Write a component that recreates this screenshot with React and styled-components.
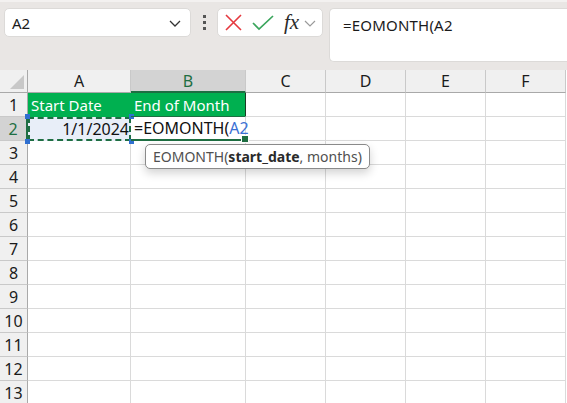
import styled, { createGlobalStyle } from "styled-components";

const Global = createGlobalStyle`
  html, body { margin: 0; padding: 0; background: #ffffff; overflow: hidden; }
  body { font-family: "Noto Sans", "Open Sans", sans-serif; }
`;

const Page = styled.div`
  width: 567px;
  height: 403px;
  position: relative;
  overflow: hidden;
  background: #ffffff;
`;

const Toolbar = styled.div`
  height: 70px;
  box-sizing: border-box;
  background: #e9e6e4;
  border-top: 2px solid #f3f1f0;
  display: flex;
  align-items: flex-start;
  padding: 6px 0 0 4px;
`;

const NameBox = styled.div`
  width: 187px;
  height: 29px;
  box-sizing: border-box;
  background: #fff;
  border: 1px solid #dcdad8;
  border-radius: 5px;
  display: flex;
  align-items: center;
  justify-content: space-between;
  padding: 0 8px 0 7px;
  font-size: 15px;
  color: #1b1b1b;
`;

const Dots = styled.div`
  width: 26px;
  height: 29px;
  display: flex;
  flex-direction: column;
  align-items: center;
  justify-content: center;
  gap: 3px;
  & > span {
    width: 3px;
    height: 3px;
    background: #555;
  }
`;

const ButtonGroup = styled.div`
  width: 106px;
  height: 29px;
  box-sizing: border-box;
  background: #fff;
  border: 1px solid #dcdad8;
  border-radius: 5px;
  display: flex;
  align-items: center;
  padding: 0 0 0 6px;
  gap: 9px;
`;

const Fx = styled.span`
  font-family: "Liberation Serif", "DejaVu Serif", serif;
  font-style: italic;
  font-size: 21px;
  color: #2a2a2a;
  margin-left: 1px;
  line-height: 1;
`;

const Chevron = styled.svg`
  margin-left: -4px;
`;

const FormulaInput = styled.div`
  margin-left: 6px;
  flex: 1;
  height: 54px;
  box-sizing: border-box;
  background: #fff;
  border: 1px solid #dcdad8;
  border-right: none;
  border-radius: 5px 0 0 5px;
  padding: 6px 0 0 13px;
  font-size: 15px;
  color: #1b1b1b;
  letter-spacing: 0.2px;
`;

const Grid = styled.div`
  display: grid;
  grid-template-columns: 28px 103px 115px 80px 80px 80px 80px;
  grid-template-rows: 23px repeat(13, 24px);
`;

const ColHead = styled.div`
  box-sizing: border-box;
  background: ${(p) => (p.active ? "#d3d3d3" : "#f0f0f0")};
  color: ${(p) => (p.active ? "#1e6e42" : "#1b1b1b")};
  border-right: 1px solid #c9c9c9;
  border-bottom: ${(p) => (p.active ? "2px solid #1e6e42" : "1px solid #a9a9a9")};
  display: flex;
  align-items: center;
  justify-content: center;
  font-size: 16px;
`;

const Corner = styled.div`
  box-sizing: border-box;
  background: #f0f0f0;
  border-right: 1px solid #a9a9a9;
  border-bottom: 1px solid #a9a9a9;
  position: relative;
  &::after {
    content: "";
    position: absolute;
    right: 3px;
    bottom: 3px;
    border-left: 14px solid transparent;
    border-bottom: 14px solid #c8c8c8;
  }
`;

const RowHead = styled.div`
  box-sizing: border-box;
  background: ${(p) => (p.active ? "#d3d3d3" : "#f0f0f0")};
  color: ${(p) => (p.active ? "#1e6e42" : "#1b1b1b")};
  border-right: ${(p) => (p.active ? "2px solid #1e6e42" : "1px solid #a9a9a9")};
  border-bottom: 1px solid #c9c9c9;
  display: flex;
  align-items: center;
  justify-content: center;
  font-size: 16px;
`;

const Cell = styled.div`
  box-sizing: border-box;
  border-right: 1px solid #dadada;
  border-bottom: 1px solid #dadada;
  position: relative;
  display: flex;
  align-items: center;
  font-size: 15px;
  color: #111;
  padding: 0 3px;
  white-space: nowrap;
`;

const HeadCell = styled(Cell)`
  background: #00b050;
  color: #fff;
  border-bottom-color: #00b050;
  border-right: ${(p) => (p.dark ? "1px solid #1a3a24" : "1px solid #00b050")};
`;

const CopyCell = styled(Cell)`
  background: #e8eef8;
  justify-content: flex-end;
  border: none;
  outline: 2px dashed #1e6e42;
  outline-offset: -2px;
  font-size: 16px;
  padding-right: 2px;
  z-index: 1;
`;

const Handle = styled.span`
  position: absolute;
  width: 5px;
  height: 5px;
  background: #2f6fd0;
  ${(p) => (p.top ? "top: -3px;" : "bottom: -3px;")}
  ${(p) => (p.left ? "left: -3px;" : "right: -3px;")}
`;

const EditCell = styled(Cell)`
  border-top: 1px solid #1e6e42;
  border-bottom: 2px solid #1e6e42;
  border-right: 1px solid #dadada;
  margin-top: -1px;
  font-size: 16px;
  padding-left: 3px;
  z-index: 2;
`;

const Ref = styled.span`
  color: #3b70d4;
`;

const FillHandle = styled.span`
  position: absolute;
  right: -4px;
  bottom: -4px;
  width: 6px;
  height: 6px;
  background: #1e6e42;
  border: 1px solid #fff;
`;

const Tip = styled.div`
  position: absolute;
  left: 145px;
  top: 144px;
  height: 25px;
  box-sizing: border-box;
  padding: 0 7px;
  display: flex;
  align-items: center;
  background: #fff;
  border: 1px solid #8a8a8a;
  border-radius: 5px;
  box-shadow: 0 4px 10px rgba(0, 0, 0, 0.18);
  font-size: 14px;
  color: #505050;
  white-space: nowrap;
  z-index: 5;
  & b {
    color: #2a2a2a;
  }
`;

const cols = ["A", "B", "C", "D", "E", "F"];

export default function App() {
  const rows = Array.from({ length: 13 }, (_, i) => i + 1);
  return (
    <Page>
      <Global />
      <Toolbar>
        <NameBox>
          <span>A2</span>
          <svg width="14" height="14" viewBox="0 0 14 14">
            <path d="M2 5l5 5 5-5" fill="none" stroke="#333" strokeWidth="1.3" />
          </svg>
        </NameBox>
        <Dots>
          <span />
          <span />
          <span />
        </Dots>
        <ButtonGroup>
          <svg width="19" height="19" viewBox="0 0 19 19">
            <path d="M2 2l15 15M17 2L2 17" stroke="#e5393f" strokeWidth="1.6" fill="none" />
          </svg>
          <svg width="22" height="18" viewBox="0 0 22 18">
            <path d="M1 9l6 6L21 2" stroke="#3aa55c" strokeWidth="1.7" fill="none" />
          </svg>
          <Fx>fx</Fx>
          <Chevron width="12" height="12" viewBox="0 0 12 12">
            <path d="M1 4l5 5 5-5" fill="none" stroke="#9a9a9a" strokeWidth="1.2" />
          </Chevron>
        </ButtonGroup>
        <FormulaInput>=EOMONTH(A2</FormulaInput>
      </Toolbar>
      <Grid>
        <Corner />
        {cols.map((c) => (
          <ColHead key={c} active={c === "B"}>
            {c}
          </ColHead>
        ))}
        {rows.map((r) => {
          if (r === 1) {
            return [
              <RowHead key="h1">1</RowHead>,
              <HeadCell key="a1">Start Date</HeadCell>,
              <HeadCell key="b1" dark>
                End of Month
              </HeadCell>,
              ...["C", "D", "E", "F"].map((c) => <Cell key={c + r} />),
            ];
          }
          if (r === 2) {
            return [
              <RowHead key="h2" active>
                2
              </RowHead>,
              <CopyCell key="a2">
                1/1/2024
                <Handle top left />
                <Handle top />
                <Handle left />
                <Handle />
              </CopyCell>,
              <EditCell key="b2">
                =EOMONTH(<Ref>A2</Ref>
                <FillHandle />
              </EditCell>,
              ...["C", "D", "E", "F"].map((c) => <Cell key={c + r} />),
            ];
          }
          return [
            <RowHead key={"h" + r}>{r}</RowHead>,
            ...cols.map((c) => <Cell key={c + r} />),
          ];
        })}
      </Grid>
      <Tip>
        EOMONTH(<b>start_date</b>, months)
      </Tip>
    </Page>
  );
}
